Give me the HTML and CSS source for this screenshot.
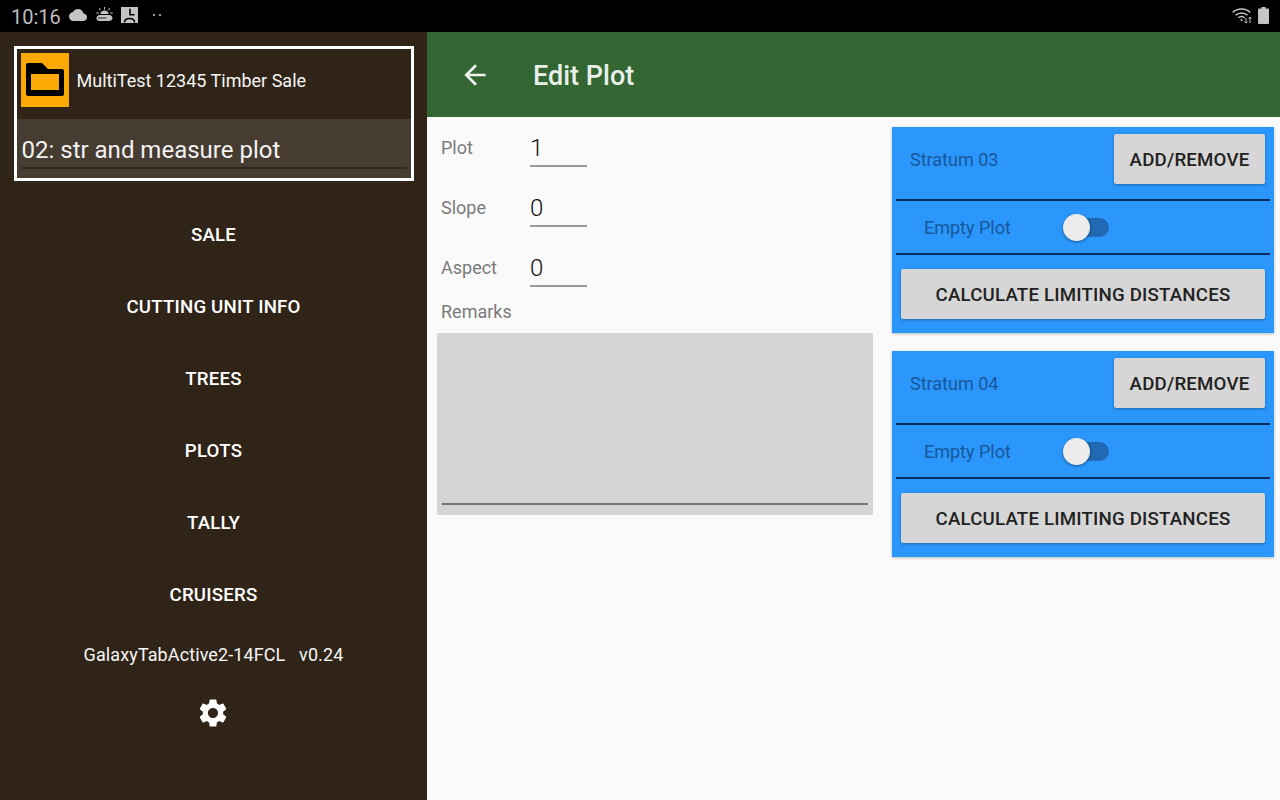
FILE: index.html

```html
<!DOCTYPE html>
<html lang="en">
<head>
  <meta charset="UTF-8">
  <title>Edit Plot</title>
  <link rel="stylesheet" href="styles.css">
</head>
<body>

  <div class="statusbar">
    <span class="clock">10:16</span>
    <svg class="st-cloud" width="18" height="18" viewBox="0 0 24 24"><path d="M19.35 10.04C18.67 6.59 15.64 4 12 4 9.11 4 6.6 5.64 5.35 8.04 2.34 8.36 0 10.91 0 14c0 3.31 2.69 6 6 6h13c2.76 0 5-2.24 5-5 0-2.64-2.05-4.78-4.65-4.96z"/></svg>
    <svg class="st-sun" width="17" height="15" viewBox="0 0 17 15"><path d="M8 0h1v2.400H8zM2.800 1.600l.9-.5 1.200 2-.9.5zM13.300 1.100l.9.5-1.200 2-.9-.5zM.2 5.400h2.600v1H.2zM14.200 5.400h2.600v1h-2.600zM4.300 7a4.300 4.300 0 0 1 8.400 0z"/><path d="M3.800 8h9.400c1.900 0 3.300 1.400 3.300 3.200 0 1.100-.9 2.100-2 2.100h-.5v.7H3.500c-1.900 0-3-1-3-2.800 0-1.800 1.400-3.200 3.300-3.200z"/><path d="M2 10.600h8.500v.8H2z" fill="#000"/></svg>
    <svg class="st-pic" width="17" height="16" viewBox="0 0 17 16"><path d="M0 0h17v16H0z"/><path d="M9 1.800v6h4.500M3.500 15.500c0-2.900 2.100-4 5-4s5 1.100 5 4" fill="none" stroke="#000" stroke-width="1.600"/></svg>
    <span class="st-dots"><i></i><i></i></span>
    <span class="st-space"></span>
    <svg class="st-wifi" width="21" height="17" viewBox="0 0 21 17" fill="none" stroke="#c4c4c4" stroke-width="1.500"><path d="M.8 5.500C5.500.9 13.500.9 18.200 5.500M3.500 8.200c3.300-3.100 8.700-3.100 12 0M6.200 10.800c1.900-1.600 4.700-1.600 6.600 0"/><circle cx="9.500" cy="13" r="1.100" fill="#c4c4c4" stroke="none"/><path d="M14 11v5M12.600 14.500 14 16l1.400-1.500M18 16v-6M16.600 11.500 18 10l1.400 1.500" stroke-width="1"/></svg>
    <svg class="st-batt" width="11" height="17" viewBox="0 0 11 17"><path d="M3.500 0h4v1.500H10a1 1 0 0 1 1 1V16a1 1 0 0 1-1 1H1a1 1 0 0 1-1-1V2.500a1 1 0 0 1 1-1h2.500z"/></svg>
  </div>

  <div class="app">

    <div class="drawer">
      <div class="salebox">
        <div class="salerow">
          <div class="foldericon">
            <svg width="48" height="54" viewBox="0 0 48 54"><path fill-rule="evenodd" d="M7 10h14l6 6h14a2 2 0 0 1 2 2v23a2 2 0 0 1-2 2H7a2 2 0 0 1-2-2V12a2 2 0 0 1 2-2zM10 21v16h28V21z"/></svg>
          </div>
          <span class="salename">MultiTest 12345 Timber Sale</span>
        </div>
        <div class="plotpick">
          <span class="plotname">02: str and measure plot</span>
        </div>
      </div>

      <div class="navitem">SALE</div>
      <div class="navitem">CUTTING UNIT INFO</div>
      <div class="navitem">TREES</div>
      <div class="navitem">PLOTS</div>
      <div class="navitem">TALLY</div>
      <div class="navitem">CRUISERS</div>

      <div class="device">GalaxyTabActive2-14FCL&nbsp;&nbsp; v0.24</div>
      <svg class="gear" width="34" height="34" viewBox="0 0 24 24"><path d="M19.140 12.940c.04-.3.06-.61.06-.94 0-.32-.02-.64-.07-.94l2.030-1.580c.18-.14.23-.41.12-.61l-1.920-3.320c-.12-.22-.37-.29-.59-.22l-2.390.96c-.5-.38-1.030-.7-1.620-.94l-.36-2.540c-.04-.24-.24-.41-.48-.41h-3.840c-.24 0-.43.17-.47.41l-.36 2.540c-.59.24-1.130.57-1.620.94l-2.390-.96c-.22-.08-.47 0-.59.22L2.740 8.870c-.12.21-.08.47.12.61l2.030 1.580c-.05.3-.09.63-.09.94s.02.64.07.94l-2.030 1.580c-.18.14-.23.41-.12.61l1.920 3.320c.12.22.37.29.59.22l2.390-.96c.5.38 1.030.7 1.620.94l.36 2.540c.05.24.24.41.48.41h3.840c.24 0 .44-.17.47-.41l.36-2.540c.59-.24 1.130-.56 1.620-.94l2.390.96c.22.08.47 0 .59-.22l1.920-3.320c.12-.22.07-.47-.12-.61l-2.010-1.580zM12 15.600c-1.980 0-3.600-1.620-3.600-3.600s1.620-3.600 3.600-3.600 3.600 1.620 3.600 3.600-1.620 3.600-3.600 3.600z"/></svg>
    </div>

    <div class="main">
      <div class="toolbar">
        <svg class="backarrow" width="32" height="32" viewBox="0 0 24 24"><path d="M20 11H7.830l5.590-5.590L12 4l-8 8 8 8 1.410-1.410L7.830 13H20v-2z"/></svg>
        <span class="title">Edit Plot</span>
      </div>

      <div class="content">

        <div class="plotform">
          <div class="field">
            <span class="fieldlabel">Plot</span>
            <span class="fieldinput">1</span>
          </div>
          <div class="field">
            <span class="fieldlabel">Slope</span>
            <span class="fieldinput">0</span>
          </div>
          <div class="field">
            <span class="fieldlabel">Aspect</span>
            <span class="fieldinput">0</span>
          </div>
          <div class="remarkslabel">Remarks</div>
          <div class="remarks"><div class="remarksline"></div></div>
        </div>

        <div class="stratalist">
          <div class="stratum">
            <div class="stratumhead">
              <span class="stratumname">Stratum 03</span>
              <div class="btn btn-add">ADD/REMOVE</div>
            </div>
            <div class="emptyrow">
              <span class="emptylabel">Empty Plot</span>
              <span class="toggle"><i class="thumb"></i></span>
            </div>
            <div class="btn btn-calc">CALCULATE LIMITING DISTANCES</div>
          </div>

          <div class="stratum">
            <div class="stratumhead">
              <span class="stratumname">Stratum 04</span>
              <div class="btn btn-add">ADD/REMOVE</div>
            </div>
            <div class="emptyrow">
              <span class="emptylabel">Empty Plot</span>
              <span class="toggle"><i class="thumb"></i></span>
            </div>
            <div class="btn btn-calc">CALCULATE LIMITING DISTANCES</div>
          </div>
        </div>

      </div>
    </div>

  </div>

</body>
</html>
```

FILE: styles.css

```css
* {
  box-sizing: border-box;
}

html, body {
  margin: 0;
  height: 100%;
  overflow: hidden;
}

body {
  width: 1280px;
  height: 800px;
  background: #000;
  font-family: Roboto, "Liberation Sans", sans-serif;
  display: flex;
  flex-direction: column;
}

/* status bar */
.statusbar {
  height: 32px;
  flex: none;
  background: #000;
  display: flex;
  align-items: center;
  padding: 0 11px 0 11px;
  color: #bdbdbd;
  fill: #c4c4c4;
}

.clock {
  font-size: 20px;
  width: 58px;
  padding-top: 1px;
}

.st-cloud { margin-top: -2px; }
.st-sun { margin-left: 9px; margin-top: -3px; }
.st-pic { margin-left: 8px; margin-top: -3px; }

.st-dots {
  display: flex;
  gap: 4px;
  margin-left: 15px;
  margin-top: -2px;
}

.st-dots i {
  width: 2px;
  height: 2px;
  background: #9a9a9a;
}

.st-space {
  flex: 1;
}

.st-wifi { margin-top: -1px; }
.st-batt { margin-left: 5px; margin-top: -2px; }

.app {
  flex: 1;
  display: flex;
  min-height: 0;
}

/* drawer */
.drawer {
  width: 427px;
  flex: none;
  background: #302418;
  padding-top: 14px;
  display: flex;
  flex-direction: column;
  align-items: center;
  color: #fff;
}

.salebox {
  width: 400px;
  height: 135px;
  border: 3px solid #fff;
  margin-bottom: 17px;
  flex: none;
  display: flex;
  flex-direction: column;
}

.salerow {
  height: 62px;
  display: flex;
  align-items: center;
  padding-left: 4px;
  flex: none;
}

.foldericon {
  width: 48px;
  height: 54px;
  background: #fba905;
  display: flex;
}

.salename {
  font-size: 18px;
  margin-left: 8px;
  color: #f5f5f5;
}

.plotpick {
  flex: 1;
  background: #463c32;
  padding: 0 4px 0 5px;
  margin-top: 8px;
}

.plotname {
  display: block;
  font-size: 24px;
  height: 50px;
  line-height: 62px;
  color: #f2f2f2;
  border-bottom: 2px solid #30261b;
}

.navitem {
  height: 72px;
  flex: none;
  display: flex;
  align-items: center;
  padding-top: 2px;
  font-size: 18.67px;
  font-weight: 500;
  letter-spacing: 0.2px;
}

.device {
  font-size: 18px;
  margin-top: 10px;
  line-height: 30px;
  letter-spacing: 0.1px;
  color: #f5f5f5;
}

.gear {
  fill: #fff;
  margin-top: 26px;
  margin-left: -1px;
}

/* main */
.main {
  flex: 1;
  background: #fafafa;
  display: flex;
  flex-direction: column;
}

.toolbar {
  height: 85px;
  flex: none;
  background: #336633;
  display: flex;
  align-items: center;
  padding: 0 0 0 32px;
}

.backarrow {
  fill: #eef3ee;
}

.title {
  margin-left: 42px;
  padding-top: 2px;
  font-size: 27px;
  font-weight: 500;
  color: #e8f0e8;
}

.content {
  flex: 1;
  display: flex;
  min-height: 0;
}

/* left form */
.plotform {
  width: 436px;
  margin-left: 10px;
  flex: none;
}

.field {
  height: 60px;
  display: flex;
}

.fieldlabel {
  width: 93px;
  padding-left: 4px;
  padding-top: 20px;
  font-size: 18px;
  line-height: 22px;
  color: #7a7a7a;
}

.fieldinput {
  width: 57px;
  height: 50px;
  font-size: 24px;
  font-weight: 300;
  line-height: 28px;
  padding-top: 17px;
  color: #111;
  border-bottom: 2px solid #999;
}

.remarkslabel {
  font-size: 18px;
  line-height: 22px;
  padding-left: 4px;
  color: #7a7a7a;
  margin-top: 4px;
}

.remarks {
  height: 182px;
  margin-top: 10px;
  background: #d5d5d5;
  padding: 170px 5px 0;
}

.remarksline {
  height: 2px;
  background: #777;
}

/* strata cards */
.stratalist {
  margin-left: 19px;
  padding-top: 10px;
  width: 382px;
  flex: none;
  display: flex;
  flex-direction: column;
  gap: 18px;
}

.stratum {
  height: 206px;
  background: #2b96fb;
  box-shadow: 0 1px 3px rgba(0, 0, 0, 0.25);
  padding: 0 4px;
  flex: none;
}

.stratumhead {
  height: 74px;
  display: flex;
  align-items: flex-start;
  justify-content: space-between;
  border-bottom: 2px solid #0a2c5c;
  padding: 7px 5px 0 14px;
}

.stratumname {
  font-size: 18px;
  line-height: 52px;
  color: #17589c;
}

.btn {
  background: #d6d6d6;
  border-radius: 2px;
  color: #222;
  font-size: 18.67px;
  font-weight: 500;
  letter-spacing: 0.2px;
  height: 50px;
  padding-top: 2px;
  display: flex;
  align-items: center;
  justify-content: center;
  box-shadow: 0 1px 3px rgba(0, 0, 0, 0.3);
}

.btn-add {
  width: 151px;
}

.btn-calc {
  width: 364px;
  margin: 14px 0 0 5px;
}

.emptyrow {
  height: 54px;
  display: flex;
  align-items: center;
  border-bottom: 2px solid #0a2c5c;
  padding-left: 28px;
}

.emptylabel {
  font-size: 18px;
  color: #17589c;
  width: 138px;
}

.toggle {
  position: relative;
  width: 47px;
  height: 19px;
  margin-left: 0;
  margin-top: 1px;
}

.toggle::before {
  content: "";
  display: block;
  margin-left: 10px;
  height: 19px;
  border-radius: 10px;
  background: #2169b3;
}

.thumb {
  position: absolute;
  left: 1px;
  top: -4px;
  width: 27px;
  height: 27px;
  border-radius: 50%;
  background: #ececec;
  box-shadow: 0 1px 3px rgba(0, 0, 0, 0.4);
}
```
